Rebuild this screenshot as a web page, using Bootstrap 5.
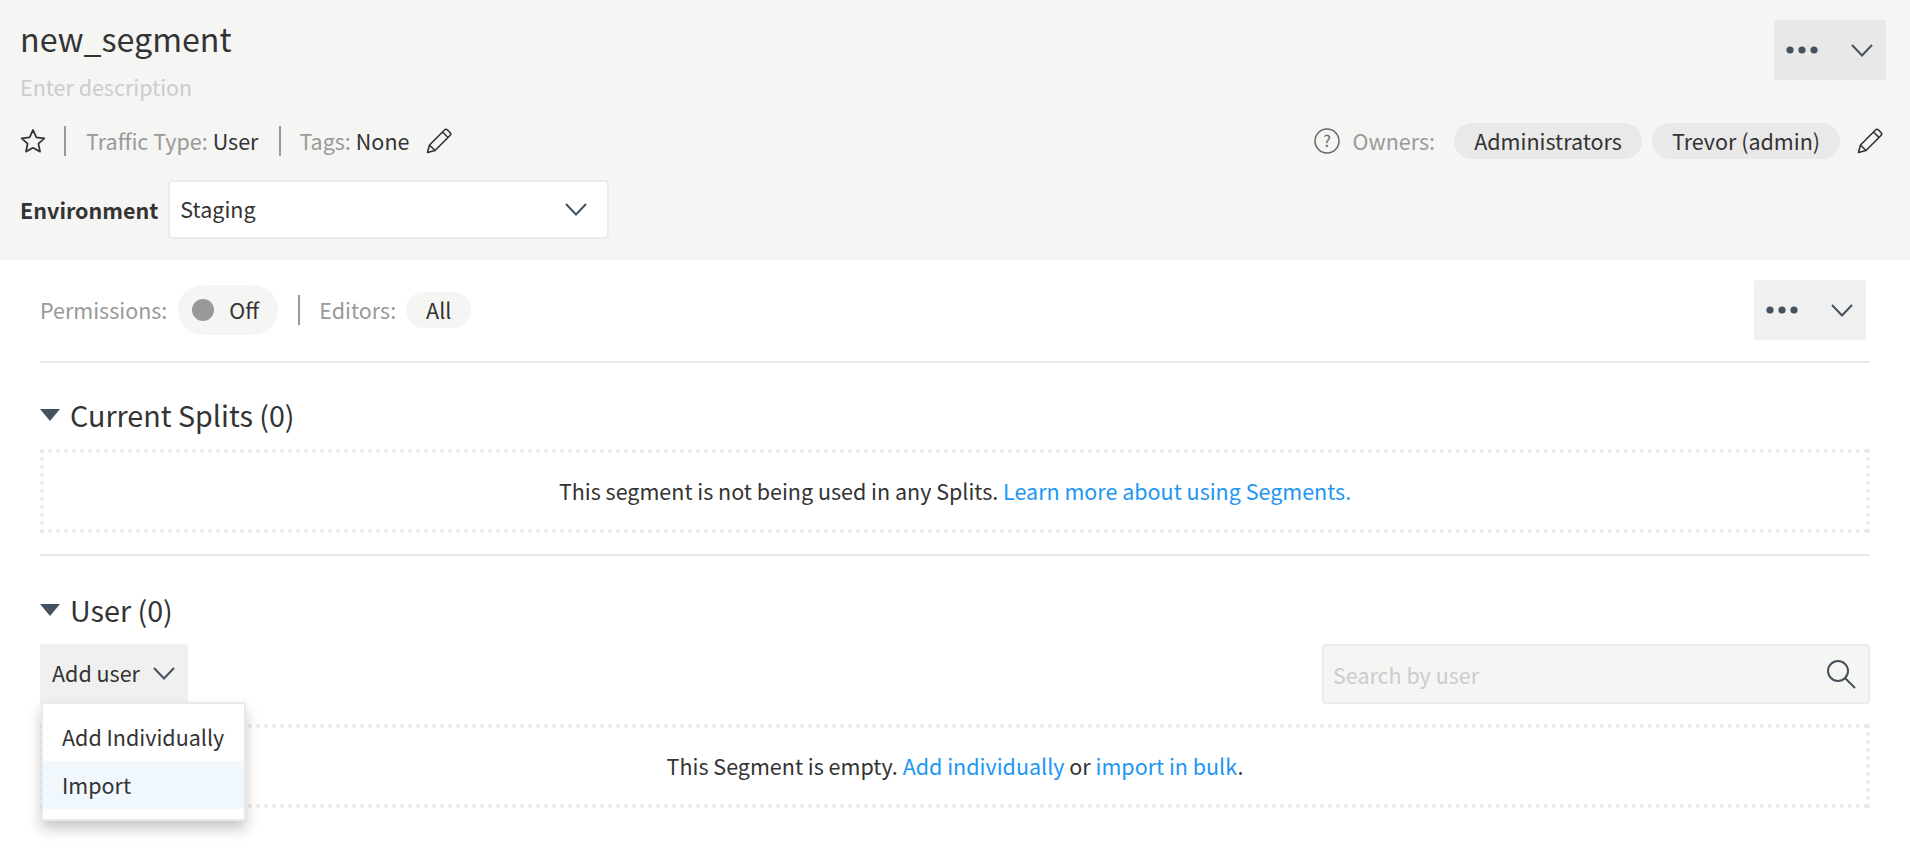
<!doctype html>
<html lang="en"><head><meta charset="utf-8"><title>new_segment</title>
<link href="https://cdn.jsdelivr.net/npm/bootstrap@5.3.0/dist/css/bootstrap.min.css" rel="stylesheet">
<style>
html,body{height:850px;overflow:hidden}
body{font-family:"Noto Sans CJK SC","Noto Sans CJK JP",sans-serif;font-size:21.5px;line-height:30px;color:#333;background:#fff}
.seg-head{background:#f5f5f3;height:260px;padding:18px 24px 0 20px}
.seg-title{font-size:32.2px;line-height:40px;margin:0;font-weight:400;color:#333}
.seg-desc{color:#ccc;line-height:30px;margin-top:14px}
.seg-meta{height:36px;margin-top:21px;padding-right:2px}
.seg-env{margin-top:21px;height:59px}
.muted{color:#999}
.vsep{width:2px;height:30px;background:#999;flex:none;margin:0 21px}
.vsep.first{margin:0 20px 0 18px}
.vsep.second{margin:0 18px 0 21px}
.val{margin-left:5px}
.env-label{font-weight:700;margin-right:10px}
.env-select{width:441px;height:59px;background:#fff;border:2px solid #ebebe9;border-radius:4px;padding:0 20px 1px 10px}
.chev{fill:none;stroke:#44525f;stroke-width:2}
.more-group{width:112px;height:60px;background:#e8e8e8;border:0;border-radius:3px 3px 0 0;padding:0 13px 0 12px}
.more-group.top{margin-top:2px}
.more-group.lite{background:#f0f0f0}
.chip-owner{height:36px;border-radius:18px;background:#e9e9e9;line-height:36px;width:188px;text-align:center;white-space:nowrap;margin-left:10px}
.chip-owner.one{margin-left:19px}
.pen-gap{margin-left:16px}
.seg-body{padding:20px 40px 0}
.perm-row{height:60px;margin-bottom:21px}
.toggle-pill{height:50px;width:100px;border-radius:25px;background:#f5f5f3;padding-left:14px;margin:0 20px 0 11px}
.knob{width:22px;height:22px;border-radius:50%;background:#999;margin-right:15px}
.ed-label{margin-left:19px}
.chip-all{height:36px;border-radius:18px;background:#f5f5f3;padding:0 20px;margin-left:10px;line-height:36px}
.line{height:2px;background:#e9e9e9;margin:0;border:0;opacity:1}
.sec-title{font-size:28.7px;line-height:40px;margin:0;font-weight:400;color:#333}
.tri{width:0;height:0;border-left:10px solid transparent;border-right:10px solid transparent;border-top:12px solid #44525f;margin-right:10px}
.dots-box{height:84px;border:4px dotted #e9e9e9;text-align:center;line-height:76px}
a.blue{color:#2196f3;text-decoration:none}
.add-btn{width:148px;height:60px;background:#f0f0f0;border:0;border-radius:3px 3px 0 0;padding:0 13px 2px 12px;color:#333;font-size:21.5px}
.search-box{width:548px;height:60px;background:#f5f5f3;border:2px solid #ebebe9;border-radius:4px;padding:0 12px 0 9px}
.search-box input{background:transparent;border:0;outline:0;flex:1;font-size:21.5px;color:#333;padding:2px 0 0}
.search-box input::placeholder{color:#ccc;opacity:1}
.menu-add{display:block;position:absolute;left:1px;top:58px;width:205px;height:119px;min-width:0;padding:0;margin:0;border:2px solid #e9e9e9;border-radius:3px;box-shadow:0 8px 14px rgba(0,0,0,.22);z-index:5;font-size:21.5px}
.menu-add .dropdown-item{padding:0 19px;height:48px;line-height:48px;color:#333}
.menu-add .first{margin-top:9px}
.menu-add .dropdown-item.hl{background:#f0f7fd}
.sec-a{margin-top:32px;height:40px}
.sec-a + .dots-box{margin-top:14px}
.sec-line{margin-top:21px}
.sec-b{margin-top:34px;height:40px}
.tools{margin-top:14px}
.box-b{margin-top:20px}
</style></head><body>
<header class="seg-head">
 <div class="d-flex justify-content-between">
  <div>
   <h1 class="seg-title">new_segment</h1>
   <div class="seg-desc">Enter description</div>
  </div>
  <button class="more-group top d-flex align-items-center justify-content-between" aria-label="More">
   <svg width="32" height="8" viewBox="0 0 32 8"><g fill="#44525f"><circle cx="4" cy="4" r="3.6"/><circle cx="16" cy="4" r="3.6"/><circle cx="28" cy="4" r="3.6"/></g></svg>
   <svg width="22" height="13" viewBox="0 0 22 13"><path class="chev" d="M1 1l10 10.500 10-10.500"/></svg>
  </button>
 </div>
 <div class="seg-meta d-flex align-items-center justify-content-between">
  <div class="d-flex align-items-center">
   <svg width="26" height="26" viewBox="0 0 24 24"><path d="M12 1.800l3.100 6.900 7.400.8-5.500 5 1.500 7.300L12 18.300l-6.500 3.500 1.500-7.300-5.500-5 7.400-.8z" fill="none" stroke="#333" stroke-width="1.600" stroke-linejoin="round"/></svg>
   <span class="vsep first"></span>
   <span class="muted">Traffic Type:</span><span class="val">User</span>
   <span class="vsep second"></span>
   <span class="muted">Tags:</span><span class="val">None</span>
   <svg class="pen-gap" width="28" height="28" viewBox="0 0 28 28"><path d="M2.500 25.500l2-7.500L19.500 3q1.500-1.500 3 0l2.500 2.500q1.500 1.500 0 3L10 23.500zM4.500 18l5.500 5.500M17.500 5l5.500 5.500" fill="none" stroke="#333" stroke-width="1.600" stroke-linejoin="round"/></svg>
  </div>
  <div class="d-flex align-items-center">
   <svg width="26" height="26" viewBox="0 0 26 26"><circle cx="13" cy="13" r="12" fill="none" stroke="#666" stroke-width="1.500"/><text x="13" y="19" text-anchor="middle" font-size="16" fill="#666">?</text></svg>
   <span class="muted ms-2 ps-1">Owners:</span>
   <span class="chip-owner one">Administrators</span>
   <span class="chip-owner">Trevor (admin)</span>
   <svg class="ms-3" width="28" height="28" viewBox="0 0 28 28"><path d="M2.500 25.500l2-7.500L19.500 3q1.500-1.500 3 0l2.500 2.500q1.500 1.500 0 3L10 23.500zM4.500 18l5.500 5.500M17.500 5l5.500 5.500" fill="none" stroke="#333" stroke-width="1.600" stroke-linejoin="round"/></svg>
  </div>
 </div>
 <div class="seg-env d-flex align-items-center">
  <span class="env-label">Environment</span>
  <div class="env-select d-flex align-items-center justify-content-between"><span>Staging</span>
   <svg width="22" height="13" viewBox="0 0 22 13"><path class="chev" d="M1 1l10 10.500 10-10.500"/></svg></div>
 </div>
</header>
<main class="seg-body">
 <div class="perm-row d-flex align-items-center justify-content-between">
  <div class="d-flex align-items-center">
   <span class="muted">Permissions:</span>
   <span class="toggle-pill d-flex align-items-center"><span class="knob"></span><span>Off</span></span>
   <span class="vsep m-0"></span>
   <span class="muted ed-label">Editors:</span>
   <span class="chip-all">All</span>
  </div>
  <button class="more-group lite d-flex align-items-center justify-content-between me-1" aria-label="More">
   <svg width="32" height="8" viewBox="0 0 32 8"><g fill="#44525f"><circle cx="4" cy="4" r="3.6"/><circle cx="16" cy="4" r="3.6"/><circle cx="28" cy="4" r="3.6"/></g></svg>
   <svg width="22" height="13" viewBox="0 0 22 13"><path class="chev" d="M1 1l10 10.500 10-10.500"/></svg>
  </button>
 </div>
 <hr class="line">
 <div class="d-flex align-items-center sec-a"><span class="tri"></span><h2 class="sec-title">Current Splits (0)</h2></div>
 <div class="dots-box">This segment is not being used in any Splits. <a class="blue" href="#">Learn more about using Segments.</a></div>
 <hr class="line sec-line">
 <div class="d-flex align-items-center sec-b"><span class="tri"></span><h2 class="sec-title">User (0)</h2></div>
 <div class="d-flex justify-content-between tools">
  <div class="position-relative">
   <button class="add-btn d-flex align-items-center justify-content-between"><span>Add user</span>
    <svg width="22" height="13" viewBox="0 0 22 13"><path class="chev" d="M1 1l10 10.500 10-10.500"/></svg></button>
   <ul class="dropdown-menu menu-add">
    <li><a class="dropdown-item first" href="#">Add Individually</a></li>
    <li><a class="dropdown-item hl" href="#">Import</a></li>
   </ul>
  </div>
  <div class="search-box d-flex align-items-center"><input placeholder="Search by user" aria-label="Search by user">
   <svg width="30" height="30" viewBox="0 0 30 30"><circle cx="12" cy="12" r="10" fill="none" stroke="#44525f" stroke-width="2"/><path d="M19 19l10 10" stroke="#44525f" stroke-width="2"/></svg></div>
 </div>
 <div class="dots-box box-b">This Segment is empty. <a class="blue" href="#">Add individually</a> or <a class="blue" href="#">import in bulk</a>.</div>
</main>
</body></html>
